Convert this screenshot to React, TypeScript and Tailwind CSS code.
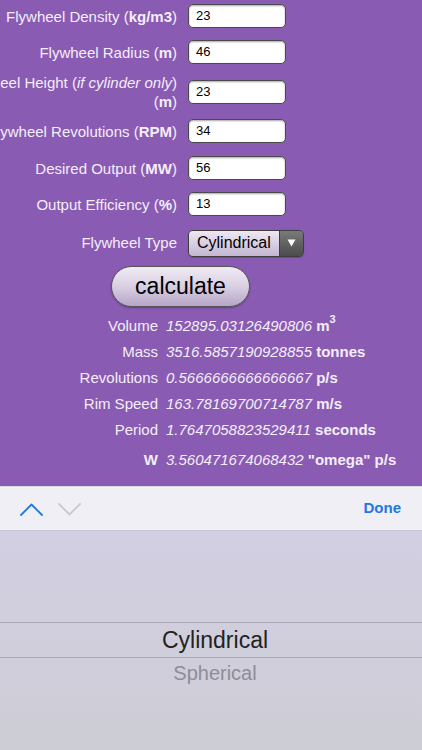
import React from "react";

const inputCls =
  "w-[98px] h-[24px] bg-white rounded-[5px] border border-[#4a4a4a] shadow-[inset_0_1px_2px_rgba(0,0,0,0.35)] px-[7px] flex items-center text-[13px] text-black";

function Row({ h, label, value }: { h: string; label: React.ReactNode; value: string }) {
  return (
    <div className={`flex items-center ${h}`}>
      <div className="w-[177px] flex justify-end whitespace-nowrap text-right text-[15px] text-[#f3eef8] leading-[19px]">
        {label}
      </div>
      <div className="ml-[11px]">
        <div className={inputCls}>{value}</div>
      </div>
    </div>
  );
}

function Result({ label, value, unit, h = "h-[26px]", labelBold = false }: { label: string; value: string; unit: React.ReactNode; h?: string; labelBold?: boolean }) {
  return (
    <div className={`flex items-center ${h} text-[15px] text-[#f3eef8] whitespace-nowrap`}>
      <div className={`w-[158px] text-right ${labelBold ? "font-bold" : ""}`}>{label}</div>
      <div className="ml-[8px]">
        <span className="italic">{value}</span> <span className="font-bold">{unit}</span>
      </div>
    </div>
  );
}

export default function App() {
  return (
    <div className="w-[422px] h-[750px] overflow-hidden flex flex-col font-['Liberation_Sans',Arial,sans-serif]">
      <div className="h-[486px] shrink-0 bg-[#8a5bb3] overflow-hidden">
        <Row h="h-[32px]" label={<span>Flywheel Density (<b>kg/m3</b>)</span>} value="23" />
        <Row h="h-[40px]" label={<span>Flywheel Radius (<b>m</b>)</span>} value="46" />
        <Row
          h="h-[40px]"
          label={
            <span className="flex flex-col items-end">
              <span>Flywheel Height (<i>if cylinder only</i>)</span>
              <span>(<b>m</b>)</span>
            </span>
          }
          value="23"
        />
        <Row h="h-[38px]" label={<span>Flywheel Revolutions (<b>RPM</b>)</span>} value="34" />
        <Row h="h-[36px]" label={<span>Desired Output (<b>MW</b>)</span>} value="56" />
        <Row h="h-[36px]" label={<span>Output Efficiency (<b>%</b>)</span>} value="13" />
        <div className="flex items-center h-[42px]">
          <div className="w-[177px] text-right text-[15px] text-[#f3eef8]">Flywheel Type</div>
          <div className="ml-[11px] w-[116px] h-[27px] rounded-[5px] border border-[#3e3e3e] overflow-hidden flex shadow-[0_1px_1px_rgba(0,0,0,0.2)]">
            <div className="flex-1 bg-gradient-to-b from-[#eee8f2] to-[#c4b6d2] flex items-center pl-[8px] text-[16px] text-black">
              Cylindrical
            </div>
            <div className="w-[24px] bg-gradient-to-b from-[#7a7a7a] to-[#4c4c4c] border-l border-[#3e3e3e] flex items-center justify-center">
              <svg width="9" height="8" viewBox="0 0 9 8">
                <path d="M0.5 0.5 L8.5 0.5 L4.5 7.5 Z" fill="#ffffff" />
              </svg>
            </div>
          </div>
        </div>
        <div className="mt-[2px] ml-[111px] w-[139px] h-[41px] rounded-full border border-[#555] bg-gradient-to-b from-[#f1ecf4] via-[#d9cfe2] to-[#b7a6c8] flex items-center justify-center text-[23px] text-black shadow-[0_1px_2px_rgba(0,0,0,0.3)]">
          calculate
        </div>
        <div className="mt-[6px]">
          <Result
            label="Volume"
            value="152895.03126490806"
            unit={
              <span>
                m<span className="inline-block align-top text-[11px] leading-none -mt-[1px]">3</span>
              </span>
            }
          />
          <Result label="Mass" value="3516.5857190928855" unit="tonnes" />
          <Result label="Revolutions" value="0.5666666666666667" unit="p/s" />
          <Result label="Rim Speed" value="163.78169700714787" unit="m/s" />
          <Result label="Period" value="1.7647058823529411" unit="seconds" />
          <Result label="W" labelBold value="3.560471674068432" unit={'"omega" p/s'} h="h-[34px]" />
          <div className="flex h-[26px] text-[15px] text-[#f3eef8] pt-[9px]">
            <div className="ml-[335px] text-[10px] font-bold leading-none">2</div>
          </div>
        </div>
      </div>

      <div className="h-[44px] shrink-0 bg-[#f0eff5] border-t border-[#dcdbe2] flex items-center pl-[20px] pr-[21px]">
        <svg width="23" height="13" viewBox="0 0 23 13" className="mt-[1px]">
          <path d="M1 12 L11.5 1.5 L22 12" fill="none" stroke="#2277e0" strokeWidth="1.8" strokeLinecap="round" strokeLinejoin="round" />
        </svg>
        <svg width="23" height="13" viewBox="0 0 23 13" className="ml-[15px] mt-[1px]">
          <path d="M1 1 L11.5 11.5 L22 1" fill="none" stroke="#c9c9ce" strokeWidth="1.8" strokeLinecap="round" strokeLinejoin="round" />
        </svg>
        <div className="flex-1" />
        <div className="text-[15px] font-bold text-[#2277e0]">Done</div>
      </div>

      <div className="flex-1 bg-gradient-to-b from-[#d3cfe3] to-[#cdcdd5] flex flex-col border-t border-[#c9c6d6]">
        <div className="h-[91px]" />
        <div className="h-[36px] border-t border-b border-[#aaa7b9] flex items-center justify-center pl-[8px] text-[23px] text-[#222]">
          Cylindrical
        </div>
        <div className="h-[30px] flex items-center justify-center pl-[8px] text-[20px] text-[#8e8d96]">
          Spherical
        </div>
      </div>
    </div>
  );
}
